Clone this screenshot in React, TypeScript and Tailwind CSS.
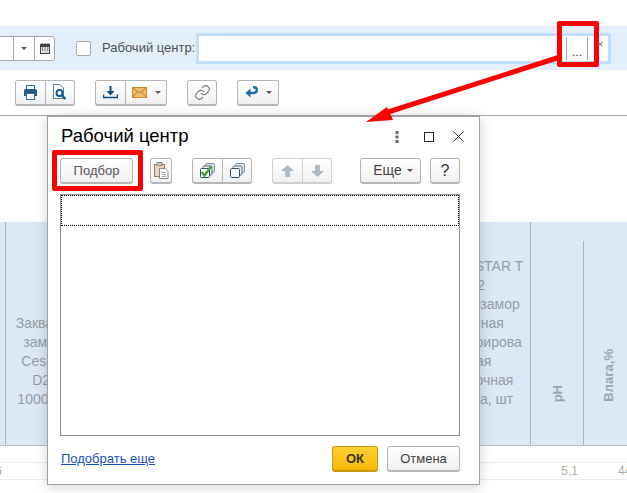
import React from 'react';

const toolBtn = 'h-[26px] flex items-center justify-center border border-[#b5b5b5] border-b-2 rounded-[3px] bg-gradient-to-b from-white to-[#f0f0f0]';

function Caret({ className = 'border-t-[#555]' }: { className?: string }) {
  return <span className={`w-0 h-0 border-x-[3px] border-x-transparent border-t-[3px] ${className}`} />;
}

function PrinterIcon() {
  return (
    <svg width="15" height="15" viewBox="0 0 15 15">
      <rect x="3.5" y="0.5" width="8" height="4" fill="#fff" stroke="#2f6d9c" />
      <path d="M1 5.5 Q1 4 2.5 4 H12.5 Q14 4 14 5.5 V11 H1 Z" fill="#1f5f8f" />
      <rect x="3.5" y="8.5" width="8" height="6" fill="#fff" stroke="#2f6d9c" />
    </svg>
  );
}

function PreviewIcon() {
  return (
    <svg width="15" height="17" viewBox="0 0 15 17">
      <path d="M1.5 0.5 H8 L11.5 4 V14.5 H1.5 Z" fill="#fff" stroke="#5f7f99" />
      <circle cx="7.5" cy="9" r="3" fill="#fff" stroke="#0f5a8a" strokeWidth="2" />
      <path d="M9.8 11.3 L13.5 15" stroke="#0f5a8a" strokeWidth="2.4" />
    </svg>
  );
}

function DownloadIcon() {
  return (
    <svg width="15" height="13" viewBox="0 0 15 13">
      <path d="M7.5 0 V7" stroke="#0f4f7f" strokeWidth="2" />
      <path d="M3.5 5 H11.5 L7.5 9.5 Z" fill="#0f4f7f" />
      <path d="M0.5 8.5 V11.5 H14.5 V8.5" fill="none" stroke="#0f4f7f" strokeWidth="1.6" />
    </svg>
  );
}

function MailIcon() {
  return (
    <svg width="15" height="11" viewBox="0 0 15 11">
      <rect x="0.5" y="0.5" width="14" height="10" fill="#efbd6d" stroke="#c98a2f" />
      <path d="M1 1 L7.5 6 L14 1 M1 10 L5.5 4.5 M14 10 L9.5 4.5" fill="none" stroke="#b97f2c" />
    </svg>
  );
}

function LinkIcon() {
  return (
    <svg width="17" height="17" viewBox="0 0 24 24" fill="none" stroke="#777" strokeWidth="1.5" strokeLinecap="round" strokeLinejoin="round">
      <path d="M10 13a5 5 0 0 0 7.5.5l3-3a5 5 0 0 0-7-7l-1.7 1.7" />
      <path d="M14 11a5 5 0 0 0-7.5-.5l-3 3a5 5 0 0 0 7 7l1.7-1.7" />
    </svg>
  );
}

function ReturnIcon() {
  return (
    <svg width="13" height="13" viewBox="0 0 13 13">
      <path d="M8 1.2 H8.5 Q11.8 1.2 11.8 4 Q11.8 7 8.5 7 H4" fill="none" stroke="#1f6ea5" strokeWidth="2.4" />
      <path d="M5.5 2.5 V11.5 L0.5 7 Z" fill="#1f6ea5" />
    </svg>
  );
}

function PasteIcon() {
  return (
    <svg width="15" height="17" viewBox="0 0 15 17">
      <rect x="0.5" y="2.5" width="10" height="12" fill="#e8d4c0" stroke="#a5774f" />
      <rect x="3" y="0.5" width="5" height="3" fill="#ccc" stroke="#888" />
      <path d="M5.5 6.5 H11 L14 9.5 V16.5 H5.5 Z" fill="#fff" stroke="#8a8a8a" />
      <path d="M7.5 10.5 H12 M7.5 12.5 H12 M7.5 14.5 H12" stroke="#aaa" />
    </svg>
  );
}

function StackIcon({ check }: { check?: boolean }) {
  return (
    <svg width="15" height="15" viewBox="0 0 15 15">
      <rect x="5.5" y="0.5" width="9" height="9" rx="1" fill="#dfe6ec" stroke="#7f8d99" />
      <rect x="3" y="3" width="9" height="9" rx="1" fill="#e9eef2" stroke="#5f7182" />
      <rect x="0.5" y="5.5" width="9" height="9" rx="1" fill="#fff" stroke="#2f4f6a" />
      {check && <path d="M1.5 9 L4.5 12.5 L11 3.5" fill="none" stroke="#3da52e" strokeWidth="2.4" />}
    </svg>
  );
}

function ArrowIcon({ down }: { down?: boolean }) {
  return (
    <svg width="13" height="12" viewBox="0 0 13 12" className={down ? 'rotate-180' : ''}>
      <path d="M6.5 0 L13 6 H9 V12 H4 V6 H0 Z" fill="#aebbc6" />
    </svg>
  );
}

function SideHeaderText({ text }: { text: string }) {
  return (
    <span className="[writing-mode:vertical-rl] rotate-180 text-[13px] font-bold leading-none text-[#9aa5b0]">{text}</span>
  );
}

export default function App() {
  return (
    <div className="relative w-[627px] h-[493px] overflow-hidden bg-white font-['Liberation_Sans',Arial,sans-serif]">
      <div className="h-[26px]" />

      {/* Filter band */}
      <div className="h-[44px] bg-[#e2effb] flex items-center">
        <div className="w-[56px] h-[25px] ml-[-1px] flex justify-end bg-white border border-[#a9a9a9] rounded-r-[3px] shrink-0">
          <div className="w-[21px] border-l border-[#a9a9a9] flex items-center justify-center">
            <Caret />
          </div>
          <div className="w-[20px] border-l border-[#a9a9a9] flex items-center justify-center">
            <svg width="10" height="11" viewBox="0 0 10 11">
              <rect x="0" y="1" width="10" height="10" fill="#444" />
              <rect x="1" y="4" width="8" height="6" fill="#ddd" />
              <path d="M2 0 V2 M5 0 V2 M8 0 V2" stroke="#444" />
              <path d="M2 5 H3 M4.5 5 H5.5 M7 5 H8 M2 7 H3 M4.5 7 H5.5 M7 7 H8" stroke="#444" />
            </svg>
          </div>
        </div>
        <div className="w-[15px] h-[15px] ml-[21px] bg-white border border-[#a9a9a9] rounded-[2px] shrink-0" />
        <span className="w-[92px] ml-[11px] text-[13px] text-[#4d4d5c] whitespace-nowrap shrink-0">Рабочий центр:</span>
        <div className="w-[415px] h-[31px] ml-[2px] border-[3px] border-[#c0def8] bg-white rounded-[1px] shrink-0 flex items-center justify-end">
          <div className="w-[22px] h-[23px] mr-[20px] border-x border-[#a9a9a9] flex items-end justify-center text-[12px] leading-[16px] text-[#444]">
            ...
          </div>
        </div>
      </div>

      {/* Report toolbar */}
      <div className="h-[45px] flex items-center pl-[15px]">
        <div className={`${toolBtn} w-[60px]`}>
          <div className="w-[30px] flex justify-center border-r border-[#b5b5b5] h-full items-center"><PrinterIcon /></div>
          <div className="w-[29px] flex justify-center"><PreviewIcon /></div>
        </div>
        <div className={`${toolBtn} w-[72px] ml-[20px]`}>
          <div className="w-[30px] flex justify-center border-r border-[#b5b5b5] h-full items-center"><DownloadIcon /></div>
          <div className="flex-1 flex justify-center items-center gap-[8px]"><MailIcon /><Caret /></div>
        </div>
        <div className={`${toolBtn} w-[30px] ml-[20px]`}><LinkIcon /></div>
        <div className={`${toolBtn} w-[42px] ml-[20px] gap-[8px]`}><ReturnIcon /><Caret /></div>
      </div>

      {/* Report sheet */}
      <div className="h-[107px] border-t border-[#a9a9a9]" />

      <div className="h-[224px] flex bg-[#dce8f4] border-b border-[#bdbdbd] text-[14px] leading-[19px] text-[#949ea8] font-medium">
        <div className="w-[5px] bg-[#dce8f4]" />
        <div className="w-[79px] border-l border-[#b3b3b3] flex flex-col justify-end items-center pb-[36px] text-center whitespace-nowrap">
          <span>Закваска</span>
          <span>замор.</span>
          <span>Ceshka</span>
          <span>D20</span>
          <span>1000 DC</span>
        </div>
        <div className="w-[338px]" />
        <div className="w-[108px] flex flex-col justify-end items-center pb-[36px] whitespace-nowrap">
          <span>ALPHASTAR T</span>
          <span>D2</span>
          <span>Быстрозамор</span>
          <span>оженная</span>
          <span>онцентрирова</span>
          <span>нная</span>
          <span>паковочная</span>
          <span>ая тара, шт</span>
        </div>
        <div className="w-[53px] border-l border-[#b3b3b3] flex justify-center items-end pb-[43px]">
          <SideHeaderText text="pH" />
        </div>
        <div className="flex-1 flex flex-col">
          <div className="h-[19px]" />
          <div className="flex-1 border-l border-[#b3b3b3] pl-[6px] flex justify-center items-end pb-[43px]">
            <SideHeaderText text="Влага,%" />
          </div>
        </div>
      </div>

      <div className="h-[17px] border-b border-[#ececec]" />
      <div className="h-[17px] border-b border-[#ececec] flex items-center text-[12px] text-[#b5ac9f]">
        <span className="ml-[-5px] text-[#8fa3b5]">6</span>
        <span className="ml-auto mr-[40px]">5,1</span>
        <span className="w-[9px] overflow-hidden whitespace-nowrap">44</span>
      </div>

      {/* Dialog */}
      <div className="absolute left-[47px] top-[115px] w-[433px] h-[370px] bg-white border border-[#a0a0a0] border-t-2 shadow-[0_2px_12px_rgba(0,0,0,0.18)] flex flex-col px-[12px]">
        <div className="h-[41px] pb-[2px] flex items-center justify-between shrink-0">
          <span className="text-[18.5px] text-black ml-[1px] leading-none">Рабочий центр</span>
          <div className="flex items-center mr-[1px]">
            <svg width="4" height="12" viewBox="0 0 4 12" className="mr-[25px]">
              <rect x="0.5" y="0" width="3" height="3" fill="#666" />
              <rect x="0.5" y="4.5" width="3" height="3" fill="#666" />
              <rect x="0.5" y="9" width="3" height="3" fill="#666" />
            </svg>
            <div className="w-[10px] h-[10px] border border-[#222] mr-[19px]" />
            <svg width="11" height="11" viewBox="0 0 11 11" className="mr-[2px]">
              <path d="M0.5 0.5 L10.5 10.5 M10.5 0.5 L0.5 10.5" stroke="#333" />
            </svg>
          </div>
        </div>

        <div className="flex shrink-0">
          <div className={`${toolBtn} w-[73px] text-[13px] text-[#555]`}>Подбор</div>
          <div className={`${toolBtn} w-[22px] ml-[17px]`}><PasteIcon /></div>
          <div className={`${toolBtn} w-[60px] ml-[20px]`}>
            <div className="w-[30px] h-full flex items-center justify-center border-r border-[#b5b5b5]"><StackIcon check /></div>
            <div className="flex-1 flex justify-center"><StackIcon /></div>
          </div>
          <div className={`${toolBtn} w-[60px] ml-[20px] border-[#d0d0d0]`}>
            <div className="w-[30px] h-full flex items-center justify-center border-r border-[#d0d0d0]"><ArrowIcon /></div>
            <div className="flex-1 flex justify-center"><ArrowIcon down /></div>
          </div>
          <div className={`${toolBtn} w-[61px] ml-[28px] text-[14px] text-[#444] gap-[5px] pl-[5px]`}>
            Еще <Caret />
          </div>
          <div className={`${toolBtn} w-[30px] ml-[9px] text-[16px] text-[#333]`}>?</div>
        </div>

        <div className="w-[400px] h-[242px] mt-[10px] border border-[#8f8f8f] shrink-0">
          <div className="h-[31px] border border-dotted border-black" />
        </div>

        <div className="w-[400px] flex-1 flex items-center pb-[2px]">
          <span className="ml-[1px] text-[13px] text-[#1a4fc4] underline">Подобрать еще</span>
          <div className="w-[46px] h-[26px] ml-auto flex items-center justify-center rounded-[3px] border border-[#c99a10] border-b-2 bg-gradient-to-b from-[#ffd02e] to-[#f5b800] text-[13px] font-bold text-[#3d3520]">
            ОК
          </div>
          <div className={`${toolBtn} w-[73px] ml-[9px] text-[13px] text-[#444]`}>Отмена</div>
        </div>
      </div>

      {/* Annotations */}
      <div className="absolute left-[557px] top-[21px] w-[42px] h-[46px] border-[5px] border-[#ff0000] rounded-[2px]" />
      <div className="absolute left-[52px] top-[150px] w-[91px] h-[41px] border-[5px] border-[#ff0000] rounded-[2px]" />
      <svg className="absolute left-0 top-0" width="627" height="493" viewBox="0 0 627 493">
        <path d="M560 57 L385 113" stroke="#ff0000" strokeWidth="5" fill="none" />
        <path d="M366 122 L387 107 L393 120 Z" fill="#ff0000" />
      </svg>
      <span className="absolute left-[597px] top-[36px] text-[11px] text-[#666]">×</span>
    </div>
  );
}
